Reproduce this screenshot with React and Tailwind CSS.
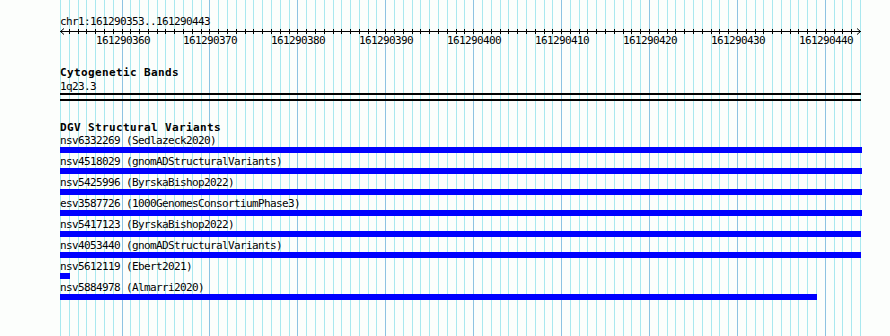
import React from "react";

const gx = (i) => Math.round(60 + (i * 800) / 91) + 0.5;

function Grid() {
  const lines = [];
  for (let i = 0; i <= 91; i++) {
    const dark = (i - 7) % 10 === 0;
    lines.push(
      <line
        key={i}
        x1={gx(i)}
        x2={gx(i)}
        y1={0}
        y2={336}
        stroke={dark ? "#8dc3e2" : "#a9e8ef"}
        strokeWidth={1}
      />
    );
  }
  return (
    <svg className="absolute inset-0" width="890" height="336" shapeRendering="crispEdges">
      {lines}
    </svg>
  );
}

function Ruler() {
  const ticks = [];
  for (let i = 1; i <= 90; i++) {
    const x = gx(i) - 60;
    ticks.push(<line key={i} x1={x} x2={x} y1={1} y2={6} stroke="#000" strokeWidth={1} />);
  }
  return (
    <svg width="802" height="7" className="block" shapeRendering="crispEdges">
      <line x1={0} x2={801} y1={3.5} y2={3.5} stroke="#000" strokeWidth={1} />
      {ticks}
      <path d="M4 0.5 L0.5 3.5 L4 6.5" fill="none" stroke="#000" strokeWidth={1} shapeRendering="auto" />
      <path d="M797 0.5 L800.5 3.5 L797 6.5" fill="none" stroke="#000" strokeWidth={1} shapeRendering="auto" />
    </svg>
  );
}

const labels = [360, 370, 380, 390, 400, 410, 420, 430, 440];

const rows = [
  { id: "nsv6332269", src: "Sedlazeck2020", w: "w-[802px]" },
  { id: "nsv4518029", src: "gnomADStructuralVariants", w: "w-[802px]" },
  { id: "nsv5425996", src: "ByrskaBishop2022", w: "w-[802px]" },
  { id: "esv3587726", src: "1000GenomesConsortiumPhase3", w: "w-[802px]" },
  { id: "nsv5417123", src: "ByrskaBishop2022", w: "w-[801px]" },
  { id: "nsv4053440", src: "gnomADStructuralVariants", w: "w-[801px]" },
  { id: "nsv5612119", src: "Ebert2021", w: "w-[10px]" },
  { id: "nsv5884978", src: "Almarri2020", w: "w-[757px]" },
];

export default function App() {
  return (
    <div className="relative w-[890px] h-[336px] overflow-hidden bg-[#fcfefc] text-black font-['DejaVu_Sans_Mono',monospace] text-[11px] tracking-[-0.62px] leading-[12px]">
      <Grid />
      <div className="relative pl-[60px] pt-[16px]">
        <div className="whitespace-pre">chr1:161290353..161290443</div>
        <Ruler />
        <div className="relative h-[12px] w-[802px]">
          {labels.map((p, k) => (
            <span
              key={p}
              className="absolute top-0 -translate-x-1/2 whitespace-pre"
              style={{ left: gx(7 + 10 * k) - 60 + 0.5 }}
            >
              {"161290" + p}
            </span>
          ))}
        </div>
        <div className="mt-[20px] font-bold tracking-[0.38px] whitespace-pre">Cytogenetic Bands</div>
        <div className="mt-[2px]">1q23.3</div>
        <div className="h-[2px] w-[801px] bg-black" />
        <div className="mt-[4px] h-[2px] w-[801px] bg-black" />
        <div className="mt-[21px] font-bold tracking-[0.38px] whitespace-pre">DGV Structural Variants</div>
        <div className="mt-px flex flex-col">
          {rows.map((r) => (
            <div key={r.id} className="flex flex-col mb-[3px]">
              <div className="whitespace-pre">{r.id + " (" + r.src + ")"}</div>
              <div className={"h-[6px] bg-[#0000ff] " + r.w} />
            </div>
          ))}
        </div>
      </div>
    </div>
  );
}
